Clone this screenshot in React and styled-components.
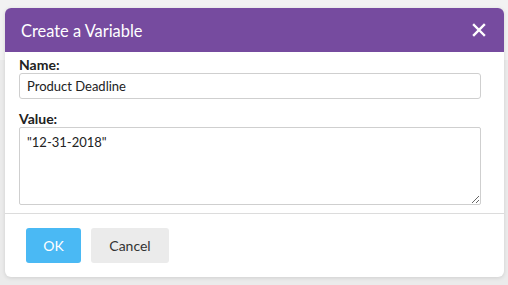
import React from "react";
import styled, { createGlobalStyle } from "styled-components";

const GlobalStyle = createGlobalStyle`
  html, body {
    margin: 0;
    padding: 0;
    background: #ececec;
    font-family: Lato, "Open Sans", sans-serif;
  }
`;

const Page = styled.div`
  width: 508px;
  height: 285px;
  padding: 8px 4px 0 5px;
  box-sizing: border-box;
  background: linear-gradient(#f2f2f2 0, #f2f2f2 60px, #ebebeb 60px);
`;

const Dialog = styled.div`
  width: 499px;
  height: 269px;
  background: #fff;
  border-radius: 6px;
  overflow: hidden;
  box-shadow: 0 1px 4px rgba(0, 0, 0, 0.12);
  display: flex;
  flex-direction: column;
`;

const Header = styled.div`
  height: 44px;
  background: #764b9f;
  color: #fff;
  display: flex;
  align-items: center;
  justify-content: space-between;
  padding: 0 17px 0 16px;
  flex-shrink: 0;
`;

const Title = styled.h2`
  margin: 0;
  font-size: 16.4px;
  font-weight: 400;
`;

const Close = styled.button`
  border: 0;
  background: none;
  padding: 0;
  width: 16px;
  height: 16px;
  display: flex;
  cursor: pointer;
`;

const Body = styled.div`
  padding: 4px 23px 0 14px;
  display: flex;
  flex-direction: column;
`;

const Label = styled.label`
  font-size: 14px;
  font-weight: 700;
  color: #222;
  line-height: 17px;
  margin-top: ${({ first }) => (first ? "0" : "11px")};
`;

const Input = styled.input`
  height: 26px;
  box-sizing: border-box;
  border: 1px solid #cfcfcf;
  border-radius: 3px;
  padding: 0 7px;
  font-family: inherit;
  font-size: 13px;
  color: #222;
  outline: none;
`;

const TextArea = styled.textarea`
  height: 78px;
  box-sizing: border-box;
  border: 1px solid #cfcfcf;
  border-radius: 2px;
  padding: 6px 7px;
  font-family: inherit;
  font-size: 13px;
  color: #222;
  outline: none;
  resize: vertical;
`;

const Footer = styled.div`
  margin-top: 8px;
  border-top: 1px solid #dcdcdc;
  padding: 14px 21px;
  display: flex;
  gap: 10px;
`;

const Button = styled.button`
  height: 35px;
  border: 0;
  border-radius: 3px;
  padding: 0 ${({ primary }) => (primary ? "17px" : "18px")};
  min-width: ${({ primary }) => (primary ? "55px" : "78px")};
  font-family: inherit;
  font-size: 14px;
  background: ${({ primary }) => (primary ? "#4ab9f4" : "#ebebeb")};
  color: ${({ primary }) => (primary ? "#fff" : "#333")};
  cursor: pointer;
`;

export default function App() {
  return (
    <>
      <GlobalStyle />
      <Page>
        <Dialog>
          <Header>
            <Title>Create a Variable</Title>
            <Close aria-label="Close">
              <svg width="16" height="16" viewBox="0 0 16 16">
                <path d="M3 3L13 13M13 3L3 13" stroke="#fff" strokeWidth="2.4" strokeLinecap="square" />
              </svg>
            </Close>
          </Header>
          <Body>
            <Label first>Name:</Label>
            <Input defaultValue="Product Deadline" />
            <Label>Value:</Label>
            <TextArea defaultValue={'"12-31-2018"'} />
          </Body>
          <Footer>
            <Button primary>OK</Button>
            <Button>Cancel</Button>
          </Footer>
        </Dialog>
      </Page>
    </>
  );
}
